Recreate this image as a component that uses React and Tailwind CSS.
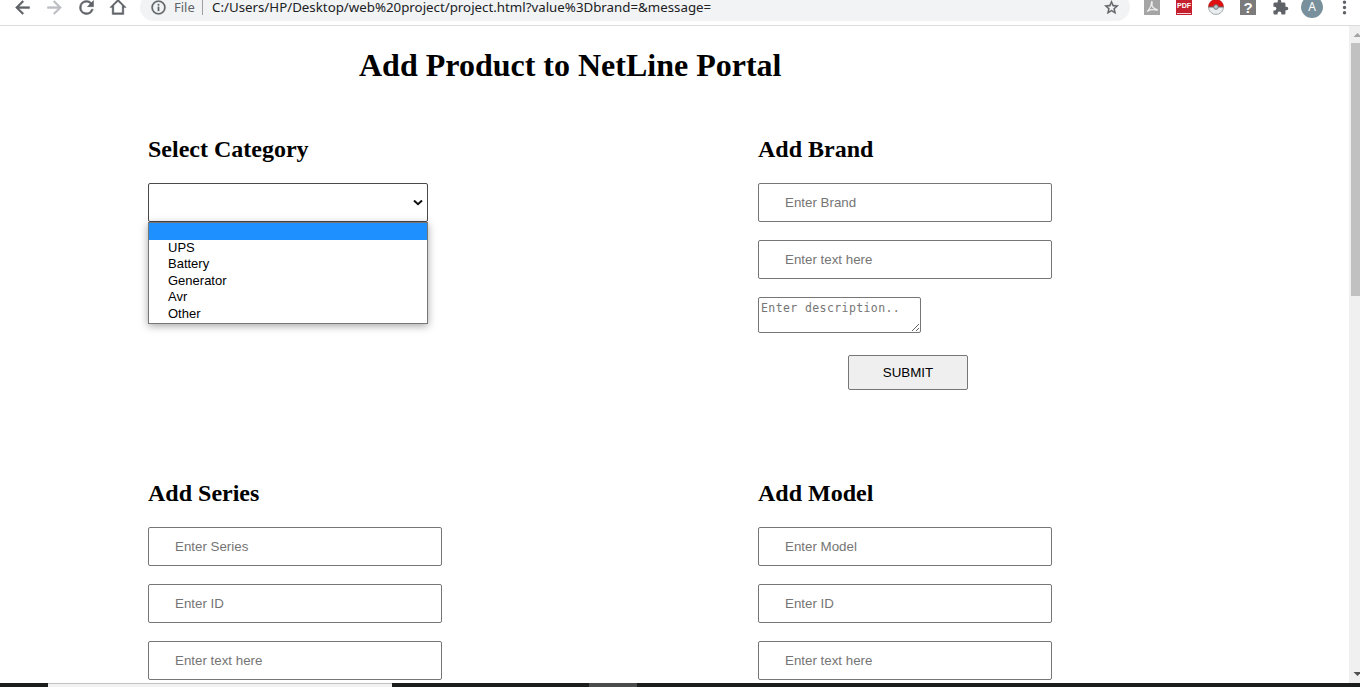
import React from "react";

function Icon({ d, size, className = "" }) {
  return (
    <svg width={size} height={size} viewBox="0 0 24 24" fill="currentColor" className={"shrink-0 " + className}>
      <path fillRule="evenodd" d={d} />
    </svg>
  );
}

function Slot({ children, className = "" }) {
  return <div className={"flex h-7 w-8 shrink-0 items-center justify-center " + className}>{children}</div>;
}

function Toolbar() {
  return (
    <header className="h-[26px] shrink-0 overflow-hidden border-b border-[#dadce0] bg-white text-[#5f6368]">
      <div className="-mt-[7px] flex h-7 items-center pl-[6px]">
        <Slot><Icon size={21} className="stroke-current stroke-[0.6]" d="M20 11H7.83l5.59-5.59L12 4l-8 8 8 8 1.41-1.41L7.83 13H20v-2z" /></Slot>
        <Slot className="text-[#bcbec1]"><Icon size={21} className="stroke-current stroke-[0.6]" d="M12 4l-1.41 1.41L16.17 11H4v2h12.17l-5.58 5.59L12 20l8-8z" /></Slot>
        <Slot><Icon size={21} className="stroke-current stroke-[0.6]" d="M17.65 6.35A7.96 7.96 0 0 0 12 4a8 8 0 1 0 7.73 10h-2.08A6 6 0 1 1 12 6c1.66 0 3.14.69 4.22 1.78L13 11h7V4z" /></Slot>
        <Slot><Icon size={20} className="stroke-current stroke-[0.5]" d="M12 2.500L2.200 12.500H5v8.500h14v-8.500h2.800zM7 19v-8.900l5-4.800 5 4.800V19z" /></Slot>
        <div className="ml-[6px] flex h-7 w-[990px] shrink-0 items-center rounded-full bg-[#f1f3f4] pl-[10px] pr-[10px]">
          <Icon size={17} className="stroke-current stroke-[0.4]" d="M11 7h2v2h-2zm0 4h2v6h-2zm1-9a10 10 0 1 0 0 20 10 10 0 0 0 0-20zm0 18a8 8 0 1 1 0-16 8 8 0 0 1 0 16z" />
          <span className="ml-[7px] w-[28px] whitespace-nowrap font-['Noto_Sans',sans-serif] text-[13px] leading-[14px]">File</span>
          <span className="h-4 w-px bg-[#9aa0a6]" />
          <span className="ml-[9px] grow whitespace-nowrap font-['Noto_Sans',sans-serif] text-[13.3px] leading-[14px] text-[#202124]">
            C:/Users/HP/Desktop/web%20project/project.html?value%3Dbrand=&amp;message=
          </span>
          <Icon size={17} className="stroke-current stroke-[0.5]" d="M22 9.240l-7.190-.62L12 2 9.190 8.630 2 9.240l5.460 4.730L5.820 21 12 17.270 18.180 21l-1.630-7.030zM12 15.400l-3.760 2.270 1-4.280-3.320-2.880 4.380-.38L12 6.100l1.710 4.040 4.380.38-3.320 2.880 1 4.280z" />
        </div>
        <div className="ml-[6px] flex items-center">
          <Slot>
            <svg width="16" height="16" viewBox="0 0 16 16">
              <rect width="16" height="16" fill="#a5a5a5" />
              <path d="M3 12.500C5 11 7.500 7 7.500 3.500c0-1.500 1-1 .6.800C7.500 7 9.500 9.500 13 10.500c1 .4 0 1-1.500.5-2.500-.7-5-.5-7.500 1" fill="none" stroke="#eee" strokeWidth="1.200" />
            </svg>
          </Slot>
          <Slot>
            <div className="flex h-4 w-4 flex-col items-center justify-between bg-[#c4202f]">
              <span className="pt-[2px] font-['Liberation_Sans',sans-serif] text-[7px] font-bold leading-[9px] text-white">PDF</span>
              <span className="mb-px h-px w-[14px] bg-white/80" />
            </div>
          </Slot>
          <Slot>
            <svg width="16" height="16" viewBox="0 0 16 16">
              <circle cx="8" cy="8" r="7.500" fill="#e8eef0" stroke="#888" strokeWidth=".7" />
              <path d="M.3 8a7.700 7.700 0 0 1 15.400 0z" fill="#dd1111" />
              <path d="M.5 8h15" stroke="#666" strokeWidth="1" />
              <circle cx="8" cy="8" r="2.300" fill="#b9c8cc" stroke="#777" strokeWidth="1" />
            </svg>
          </Slot>
          <Slot>
            <div className="flex h-4 w-4 items-center justify-center bg-[#7b7b7b] font-['Liberation_Sans',sans-serif] text-[15px] font-bold leading-[13px] text-white">?</div>
          </Slot>
          <Slot><Icon size={17} d="M20.500 11H19V7a2 2 0 0 0-2-2h-4V3.500a2.500 2.500 0 0 0-5 0V5H4a2 2 0 0 0-2 2v3.800h1.500a2.700 2.700 0 0 1 0 5.400H2V20c0 1.100.9 2 2 2h3.800v-1.500a2.700 2.700 0 0 1 5.400 0V22H17a2 2 0 0 0 2-2v-4h1.500a2.500 2.500 0 0 0 0-5z" /></Slot>
          <Slot>
            <div className="flex h-[22px] w-[22px] items-center justify-center rounded-full bg-[#78909c] font-['Noto_Sans',sans-serif] text-[12px] leading-none text-white">A</div>
          </Slot>
          <Slot><Icon size={21} d="M12 8a2 2 0 1 0 0-4 2 2 0 0 0 0 4zm0 2a2 2 0 1 0 0 4 2 2 0 0 0 0-4zm0 6a2 2 0 1 0 0 4 2 2 0 0 0 0-4z" /></Slot>
        </div>
      </div>
    </header>
  );
}

function Field({ placeholder }) {
  return (
    <input
      type="text"
      placeholder={placeholder}
      className="block h-[39px] w-[294px] rounded-[2px] border border-[#767676] bg-white px-[26px] font-['Liberation_Sans',sans-serif] text-[13.333px] text-black placeholder:text-[#757575]"
    />
  );
}

function Section({ title, children }) {
  return (
    <section className="w-[610px] shrink-0">
      <h2 className="mb-[20px] whitespace-nowrap text-[24px] font-bold leading-[28px]">{title}</h2>
      <div className="flex flex-col gap-[18px]">{children}</div>
    </section>
  );
}

const options = ["UPS", "Battery", "Generator", "Avr", "Other"];

function CategorySelect() {
  return (
    <div className="relative w-[280px] font-['Liberation_Sans',sans-serif]">
      <div className="flex h-[39px] items-center justify-end rounded-[2px] border border-[#4a4a4a] bg-white pr-[4px]">
        <svg width="10" height="6" viewBox="0 0 10 6" fill="none" stroke="#101010" strokeWidth="2">
          <path d="M1 0.500L5 4.200 9 0.500" />
        </svg>
      </div>
      <ul className="absolute left-0 top-[39px] h-[102px] w-[280px] border border-[#767676] bg-white text-[13px] leading-[16.5px] text-black shadow-[0_2px_8px_rgba(0,0,0,0.35)]">
        <li className="-mb-[0.3px] h-[17px] bg-[#1e90ff]" />
        {options.map((o) => (
          <li key={o} className="h-[16.5px] pl-[19px]">{o}</li>
        ))}
      </ul>
    </div>
  );
}

export default function App() {
  return (
    <div className="flex h-[687px] w-[1360px] flex-col overflow-hidden bg-white">
      <Toolbar />
      <div className="flex h-[657px] shrink-0 overflow-hidden">
        <main className="w-[1349px] shrink-0 overflow-hidden font-['Liberation_Serif',serif] text-black">
          <h1 className="ml-[359px] mt-[21px] whitespace-nowrap text-[32px] font-bold leading-[37px]">Add Product to NetLine Portal</h1>
          <div className="ml-[148px] mt-[51px] flex h-[344px]">
            <Section title="Select Category"><CategorySelect /></Section>
            <Section title="Add Brand">
              <Field placeholder="Enter Brand" />
              <Field placeholder="Enter text here" />
              <textarea
                placeholder="Enter description.."
                className="block h-[36px] w-[163px] resize overflow-hidden rounded-[2px] border border-[#767676] bg-white p-[2px] font-['DejaVu_Sans_Mono',monospace] text-[11.5px] leading-[16px] tracking-[0.4px] placeholder:text-[#757575]"
              />
              <button className="ml-[90px] mt-[4px] h-[35px] w-[120px] rounded-[2px] border border-[#767676] bg-[#efefef] font-['Liberation_Sans',sans-serif] text-[13.333px] text-black">SUBMIT</button>
            </Section>
          </div>
          <div className="ml-[148px] flex">
            <Section title="Add Series">
              <Field placeholder="Enter Series" />
              <Field placeholder="Enter ID" />
              <Field placeholder="Enter text here" />
            </Section>
            <Section title="Add Model">
              <Field placeholder="Enter Model" />
              <Field placeholder="Enter ID" />
              <Field placeholder="Enter text here" />
            </Section>
          </div>
        </main>
        <div className="flex w-[11px] shrink-0 flex-col justify-between overflow-hidden bg-[#f0f0f0] pl-[2px]">
          <div>
            <svg className="block" width="9" height="17" viewBox="0 0 9 17" fill="#a3a3a3"><path d="M2.500 11L6.500 7 10.500 11z" /></svg>
            <div className="h-[253px] w-[9px] bg-[#c1c1c1]" />
          </div>
          <svg className="block" width="9" height="17" viewBox="0 0 9 17" fill="#505050"><path d="M2.500 6L6.500 10 10.500 6z" /></svg>
        </div>
      </div>
      <footer className="flex h-1 shrink-0 bg-[#1b1c1c]">
        <div className="ml-[48px] w-[344px] border-t border-[#c0c4c0] bg-[#f1f2f1]" />
        <div className="ml-[197px] w-[48px] bg-[#4a4b4b]" />
      </footer>
    </div>
  );
}
